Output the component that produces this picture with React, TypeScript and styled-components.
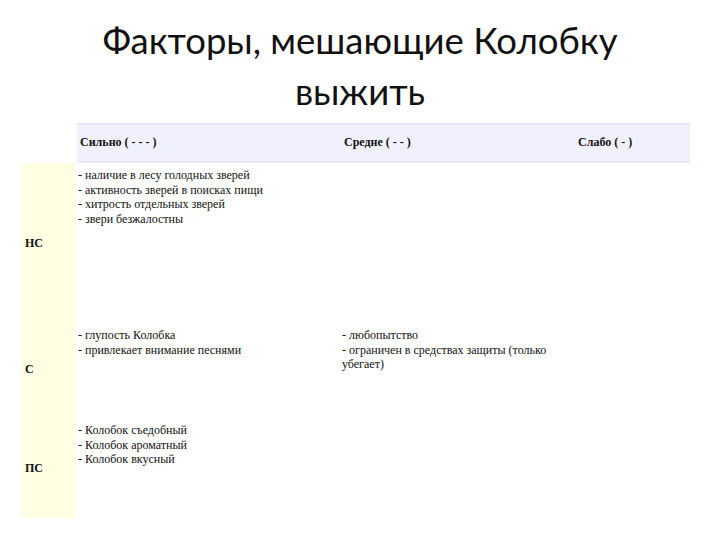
import React from "react";
import styled, { createGlobalStyle } from "styled-components";

const Global = createGlobalStyle`
  html, body { margin: 0; padding: 0; background: #ffffff; }
  body { width: 720px; height: 540px; overflow: hidden; }
`;

const Page = styled.div`
  width: 720px;
  height: 540px;
  display: flex;
  flex-direction: column;
  background: #ffffff;
`;

const Title = styled.h1`
  margin: 15px 0 0 0;
  height: 102px;
  font-family: Lato, "Open Sans", sans-serif;
  font-weight: 400;
  font-size: 36.5px;
  line-height: 51px;
  text-align: center;
  color: #111111;
`;

const Table = styled.div`
  margin: 6px 0 0 22px;
  display: grid;
  grid-template-columns: 55px 264px 234px 115px;
  grid-template-rows: 40px 157px 95px 103px;
  font-family: "Liberation Serif", "Times New Roman", serif;
  font-size: 12px;
  color: #111111;
`;

const HeaderBand = styled.div`
  grid-column: 2 / 5;
  grid-row: 1;
  background: #f1f0fd;
  border-top: 2px solid #e9e7f9;
  border-bottom: 2px solid #e9e7f9;
  box-sizing: border-box;
`;

const HeadCell = styled.div<{ $col: number }>`
  grid-column: ${(p) => p.$col};
  grid-row: 1;
  display: flex;
  align-items: center;
  padding-left: 3px;
  padding-bottom: 1px;
  font-weight: 700;
  z-index: 1;
`;

const Label = styled.div<{ $row: number }>`
  grid-column: 1;
  grid-row: ${(p) => p.$row};
  width: 53px;
  box-sizing: border-box;
  background: #fefee3;
  display: flex;
  align-items: center;
  padding-left: 3px;
  padding-top: 3px;
  font-weight: 700;
`;

const Cell = styled.div<{ $row: number; $col: number }>`
  grid-column: ${(p) => p.$col};
  grid-row: ${(p) => p.$row};
  padding: ${(p) => (p.$row === 1 ? 4 : p.$row === 2 ? 5 : 8)}px 8px 0 1px;
  line-height: 14.5px;
`;

const Line = styled.div``;

const rows = [
  {
    label: "НС",
    cells: [
      [
        "- наличие в лесу голодных зверей",
        "- активность зверей в поисках пищи",
        "- хитрость отдельных зверей",
        "- звери безжалостны",
      ],
      [],
      [],
    ],
  },
  {
    label: "С",
    cells: [
      ["- глупость Колобка", "- привлекает внимание песнями"],
      ["- любопытство", "- ограничен в средствах защиты (только убегает)"],
      [],
    ],
  },
  {
    label: "ПС",
    cells: [
      ["- Колобок съедобный", "- Колобок ароматный", "- Колобок вкусный"],
      [],
      [],
    ],
  },
];

export default function App() {
  return (
    <Page>
      <Global />
      <Title>
        Факторы, мешающие Колобку
        <br />
        выжить
      </Title>
      <Table>
        <HeaderBand />
        <HeadCell $col={2}>Сильно ( - - - )</HeadCell>
        <HeadCell $col={3}>Средне ( - - )</HeadCell>
        <HeadCell $col={4}>Слабо ( - )</HeadCell>
        {rows.map((r, i) => (
          <React.Fragment key={r.label}>
            <Label $row={i + 2}>{r.label}</Label>
            {r.cells.map((lines, j) => (
              <Cell key={j} $row={i + 2} $col={j + 2}>
                {lines.map((l) => (
                  <Line key={l}>{l}</Line>
                ))}
              </Cell>
            ))}
          </React.Fragment>
        ))}
      </Table>
    </Page>
  );
}
